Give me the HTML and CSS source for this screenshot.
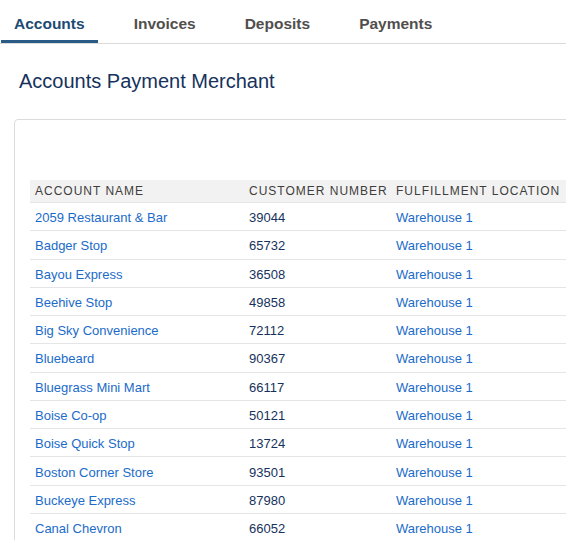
FILE: index.html
```html
<!DOCTYPE html>
<html lang="en">
<head>
<meta charset="utf-8">
<title>Accounts Payment Merchant</title>
<link rel="stylesheet" href="styles.css">
</head>
<body>
<nav class="tabs">
  <a class="tab active">Accounts</a>
  <a class="tab">Invoices</a>
  <a class="tab">Deposits</a>
  <a class="tab">Payments</a>
</nav>
<main class="content">
  <h1 class="title">Accounts Payment Merchant</h1>
  <section class="card">
    <div class="grid">
      <div class="row head">
        <div class="cell">Account Name</div>
        <div class="cell">Customer Number</div>
        <div class="cell">Fulfillment Location</div>
      </div>
      <div class="row"><a class="cell link">2059 Restaurant &amp; Bar</a><div class="cell num">39044</div><a class="cell link">Warehouse 1</a></div>
      <div class="row"><a class="cell link">Badger Stop</a><div class="cell num">65732</div><a class="cell link">Warehouse 1</a></div>
      <div class="row"><a class="cell link">Bayou Express</a><div class="cell num">36508</div><a class="cell link">Warehouse 1</a></div>
      <div class="row"><a class="cell link">Beehive Stop</a><div class="cell num">49858</div><a class="cell link">Warehouse 1</a></div>
      <div class="row"><a class="cell link">Big Sky Convenience</a><div class="cell num">72112</div><a class="cell link">Warehouse 1</a></div>
      <div class="row"><a class="cell link">Bluebeard</a><div class="cell num">90367</div><a class="cell link">Warehouse 1</a></div>
      <div class="row"><a class="cell link">Bluegrass Mini Mart</a><div class="cell num">66117</div><a class="cell link">Warehouse 1</a></div>
      <div class="row"><a class="cell link">Boise Co-op</a><div class="cell num">50121</div><a class="cell link">Warehouse 1</a></div>
      <div class="row"><a class="cell link">Boise Quick Stop</a><div class="cell num">13724</div><a class="cell link">Warehouse 1</a></div>
      <div class="row"><a class="cell link">Boston Corner Store</a><div class="cell num">93501</div><a class="cell link">Warehouse 1</a></div>
      <div class="row"><a class="cell link">Buckeye Express</a><div class="cell num">87980</div><a class="cell link">Warehouse 1</a></div>
      <div class="row"><a class="cell link">Canal Chevron</a><div class="cell num">66052</div><a class="cell link">Warehouse 1</a></div>
    </div>
  </section>
</main>
</body>
</html>
```

FILE: styles.css
```css
html, body {
  margin: 0;
  padding: 0;
  background: #ffffff;
  overflow: hidden;
}

body {
  font-family: "Liberation Sans", Arial, Helvetica, sans-serif;
  color: #16325c;
}

.tabs {
  display: flex;
  gap: 23px;
  padding-left: 1px;
  border-bottom: 1px solid #dddbda;
}

.tab {
  display: block;
  padding: 14px 13px 6px;
  line-height: 20px;
  font-size: 15.5px;
  font-weight: 700;
  color: #514f4d;
  border-bottom: 3px solid transparent;
  cursor: pointer;
}

.tab.active {
  color: #1d4a73;
  border-bottom-color: #2a5b87;
}

.content {
  padding-left: 14px;
}

.title {
  margin: 25px 0 0;
  padding-left: 5px;
  font-size: 20px;
  line-height: 24px;
  font-weight: 400;
  color: #16325c;
}

.card {
  margin-top: 26px;
  width: 720px;
  height: 600px;
  border: 1px solid #dddbda;
  border-radius: 4px;
  padding: 60px 0 0 15px;
  box-sizing: border-box;
}

.grid {
  display: flex;
  flex-direction: column;
}

.row {
  display: grid;
  grid-template-columns: 214px 147px 240px;
  align-items: center;
  height: 28.27px;
  box-sizing: border-box;
  border-bottom: 1px solid #e5e5e5;
  font-size: 13px;
}

.row .cell {
  padding-top: 2px;
}

.row.head {
  height: 23px;
  background: #f3f2f2;
  font-size: 12px;
  letter-spacing: 1px;
  text-transform: uppercase;
  color: #3e3e3c;
}

.row.head .cell {
  padding-top: 0;
}

.cell {
  padding-left: 5px;
  white-space: nowrap;
}

.link {
  color: #1b6bc9;
  text-decoration: none;
  cursor: pointer;
}

.num {
  color: #16325c;
}
```
